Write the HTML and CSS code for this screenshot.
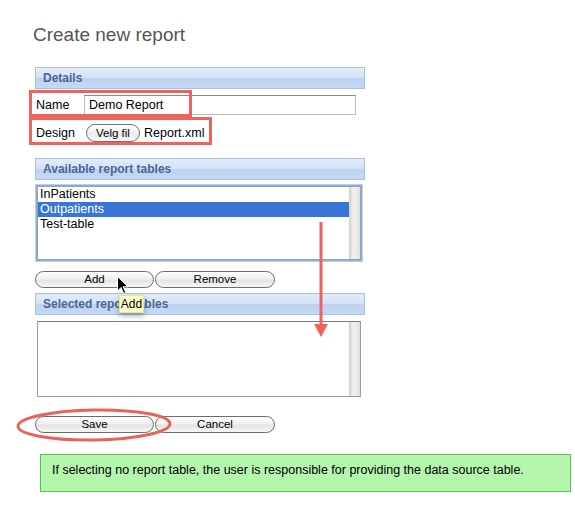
FILE: index.html
```html
<!DOCTYPE html>
<html>
<head>
<meta charset="utf-8">
<link rel="stylesheet" href="styles.css">
</head>
<body>
<div class="page">
  <h1 class="title">Create new report</h1>

  <div class="panel-head head-details">Details</div>
  <div class="field-row name-row">
    <span class="field-label name-label">Name</span>
    <div class="text-input">Demo Report</div>
  </div>
  <div class="field-row design-row">
    <span class="field-label design-label">Design</span>
    <span class="file-btn">Velg fil</span>
    <span class="file-name">Report.xml</span>
  </div>

  <div class="panel-head head-available">Available report tables</div>
  <div class="listbox focused">
    <div class="listbox-inner">
      <div class="items">
        <div class="item">InPatients</div>
        <div class="item selected">Outpatients</div>
        <div class="item">Test-table</div>
      </div>
      <div class="scrolltrack"></div>
    </div>
  </div>

  <div class="btn-row add-row">
    <span class="pill-btn">Add</span>
    <span class="pill-btn wide">Remove</span>
  </div>

  <div class="panel-head head-selected">Selected report tables</div>
  <div class="listbox plain">
    <div class="items"></div>
    <div class="scrolltrack"></div>
  </div>

  <div class="btn-row save-row">
    <span class="pill-btn">Save</span>
    <span class="pill-btn wide">Cancel</span>
  </div>

  <div class="note">If selecting no report table, the user is responsible for providing the data source table.</div>
</div>

<div class="annotations">
  <div class="mark-box mark-name"></div>
  <div class="mark-box mark-design"></div>
  <svg class="overlay-svg" width="575" height="518" viewBox="0 0 575 518">
    <line x1="321" y1="222" x2="321" y2="327" stroke="#ee6259" stroke-width="3"/>
    <polygon points="314,324 328,324 321,337" fill="#ee6259"/>
    <ellipse cx="94" cy="425" rx="76" ry="15" fill="none" stroke="#e8635b" stroke-width="3" transform="rotate(-1 94 425)"/>
    <path d="M117.5,276.5 L117.5,291 L121,287.5 L123.6,293.5 L125.8,292.5 L123.2,286.8 L128,286.8 Z" fill="#000" stroke="#fff" stroke-width="1"/>
  </svg>
  <div class="tooltip">Add</div>
</div>
</body>
</html>
```

FILE: styles.css
```css
html, body {
  margin: 0;
  padding: 0;
  background: #fff;
}

body {
  font-family: "Liberation Sans", Arial, sans-serif;
  color: #000;
  position: relative;
  width: 575px;
  height: 518px;
  overflow: hidden;
}

.page {
  padding-left: 35px;
  display: flex;
  flex-direction: column;
  align-items: flex-start;
}

.title {
  margin: 24px 0 0 -2px;
  font-size: 19px;
  line-height: 22px;
  font-weight: normal;
  color: #555;
}

.panel-head {
  box-sizing: border-box;
  width: 330px;
  height: 22px;
  border: 1px solid #a7bfe1;
  background: linear-gradient(#e2ecf9 0%, #d3e2f6 48%, #bcd2f0 52%, #c6d9f3 100%);
  color: #4a6797;
  font-size: 12px;
  font-weight: bold;
  line-height: 20px;
  padding-left: 7px;
}

.head-details { margin-top: 21px; }
.head-available { margin-top: 16px; }
.head-selected { margin-top: 5px; }

.field-row {
  display: flex;
  align-items: center;
  font-size: 12.5px;
}

.name-row {
  margin-top: 6px;
  height: 20px;
}

.design-row {
  margin-top: 9px;
  height: 18px;
}

.field-label {
  padding-left: 1px;
}

.name-label { width: 48px; }
.design-label { width: 50px; }

.text-input {
  box-sizing: border-box;
  width: 272px;
  height: 20px;
  border: 1px solid #bdbdbd;
  border-top-color: #8a8a8a;
  background: #fff;
  padding-left: 4px;
  line-height: 18px;
}

.file-btn {
  box-sizing: border-box;
  width: 54px;
  height: 18px;
  border: 1px solid #707070;
  border-radius: 9px;
  background: linear-gradient(#ffffff, #ececec 60%, #f6f6f6);
  font-size: 11.5px;
  line-height: 16px;
  text-align: center;
}

.file-name {
  margin-left: 4px;
}

.listbox {
  box-sizing: border-box;
  background: #fff;
  display: flex;
}

.listbox.focused {
  margin-top: 4px;
  width: 328px;
  height: 78px;
  border: 2px solid #88aedc;
  outline: 1px solid #b9d1ef;
  outline-offset: -1px;
}

.listbox-inner {
  flex: 1;
  display: flex;
  border: 1px solid #9aa3ad;
}

.items {
  flex: 1;
  display: flex;
  flex-direction: column;
}

.item {
  height: 15px;
  line-height: 15px;
  font-size: 12.5px;
  padding-left: 2px;
}

.item.selected {
  background: #3875d7;
  color: #fff;
}

.scrolltrack {
  width: 10px;
  background: linear-gradient(90deg, #d6d6d6, #f2f2f2 30%, #e8e8e8 80%, #dcdcdc);
  border-left: 1px solid #d0d0d0;
}

.listbox.plain {
  margin-top: 6px;
  margin-left: 2px;
  width: 324px;
  height: 76px;
  border: 1px solid #8c8c8c;
  border-color: #7d7d7d #9c9c9c #9c9c9c #9c9c9c;
}

.btn-row {
  display: flex;
  gap: 1px;
}

.add-row { margin-top: 9px; }
.save-row { margin-top: 19px; }

.pill-btn {
  box-sizing: border-box;
  width: 119px;
  height: 17px;
  border: 1px solid #6c6c6c;
  border-radius: 9px;
  background: linear-gradient(#ffffff, #f0f0f0 45%, #e4e4e4 55%, #f7f7f7);
  font-size: 11.5px;
  line-height: 15px;
  text-align: center;
}

.pill-btn.wide { width: 120px; }

.note {
  box-sizing: border-box;
  margin-top: 21px;
  margin-left: 5px;
  width: 531px;
  height: 38px;
  border: 1px solid #58c24a;
  background: #b4f6ae;
  font-size: 12.5px;
  line-height: 15px;
  padding: 8px 11px;
}

.annotations {
  position: absolute;
  left: 0;
  top: 0;
  width: 575px;
  height: 518px;
  pointer-events: none;
}

.mark-box {
  position: absolute;
  box-sizing: border-box;
  border: 3px solid #ee645a;
}

.mark-name {
  left: 29px;
  top: 90px;
  width: 163px;
  height: 27px;
}

.mark-design {
  left: 29px;
  top: 117px;
  width: 183px;
  height: 28px;
}

.overlay-svg {
  position: absolute;
  left: 0;
  top: 0;
}

.tooltip {
  position: absolute;
  left: 119px;
  top: 295px;
  width: 25px;
  height: 18px;
  box-sizing: border-box;
  background: #ffffc6;
  border: 1px solid #e2e2b0;
  box-shadow: 0 3px 5px rgba(0, 0, 0, 0.3);
  font-size: 12px;
  line-height: 16px;
  text-align: center;
  color: #000;
}
```
